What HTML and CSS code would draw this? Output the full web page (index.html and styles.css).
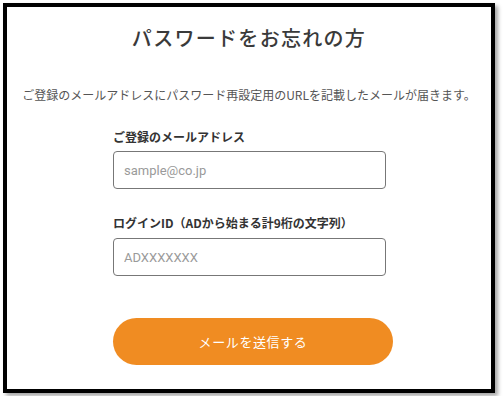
FILE: index.html
```html
<!DOCTYPE html>
<html lang="ja">
<head>
    <meta charset="UTF-8">
    <meta name="viewport" content="width=device-width, initial-scale=1.0">
    <title>パスワードをお忘れの方</title>
    <link rel="stylesheet" href="styles.css">
</head>
<body>
    <div class="frame">
        <h1 class="title">パスワードをお忘れの方</h1>
        <p class="lead">ご登録のメールアドレスにパスワード再設定用のURLを記載したメールが届きます。</p>

        <form class="reset-form">
            <label class="field-label" for="email">ご登録のメールアドレス</label>
            <input class="field-input" id="email" type="text" placeholder="sample@co.jp">

            <label class="field-label" for="login-id">ログインID（ADから始まる計9桁の文字列）</label>
            <input class="field-input field-input-last" id="login-id" type="text" placeholder="ADXXXXXXX">

            <button class="submit-btn" type="button">メールを送信する</button>
        </form>
    </div>
</body>
</html>
```

FILE: styles.css
```css
body {
    margin: 0;
    padding: 0;
    background: #fff;
    font-family: "Noto Sans CJK JP", "Noto Sans", sans-serif;
}

.frame {
    box-sizing: border-box;
    width: 492px;
    height: 390px;
    margin: 3px;
    padding-top: 17px;
    border: 4px solid #000;
    background: #fff;
    box-shadow: 3px 3px 4px rgba(0,0,0,0.35);
}

.title {
    margin: 0;
    font-size: 20px;
    line-height: 28px;
    font-weight: 500;
    letter-spacing: 1.3px;
    text-align: center;
    color: #3a3a3a;
}

.lead {
    margin: 34px 0 0;
    font-size: 12px;
    line-height: 18px;
    text-align: center;
    color: #555;
}

.reset-form {
    display: flex;
    flex-direction: column;
    align-items: flex-start;
    margin: 24px 0 0 106px;
    width: 280px;
}

.field-label {
    font-size: 12px;
    line-height: 18px;
    font-weight: bold;
    color: #333;
}

.field-input {
    box-sizing: border-box;
    width: 273px;
    height: 38px;
    margin-top: 5px;
    margin-bottom: 25px;
    padding: 0 10px;
    border: 1px solid #777;
    border-radius: 4px;
    font-family: Roboto, "Noto Sans CJK JP", sans-serif;
    font-size: 13px;
    color: #333;
    outline: none;
}

.field-input::placeholder {
    color: #9a9a9a;
}

.field-input-last {
    margin-top: 6px;
    margin-bottom: 0;
}

.submit-btn {
    width: 280px;
    height: 47px;
    margin-top: 42px;
    border: none;
    border-radius: 24px;
    background: #f08c22;
    color: #fff;
    font-family: "Noto Sans CJK JP", sans-serif;
    font-size: 13px;
    letter-spacing: 0.6px;
    cursor: pointer;
}
```
